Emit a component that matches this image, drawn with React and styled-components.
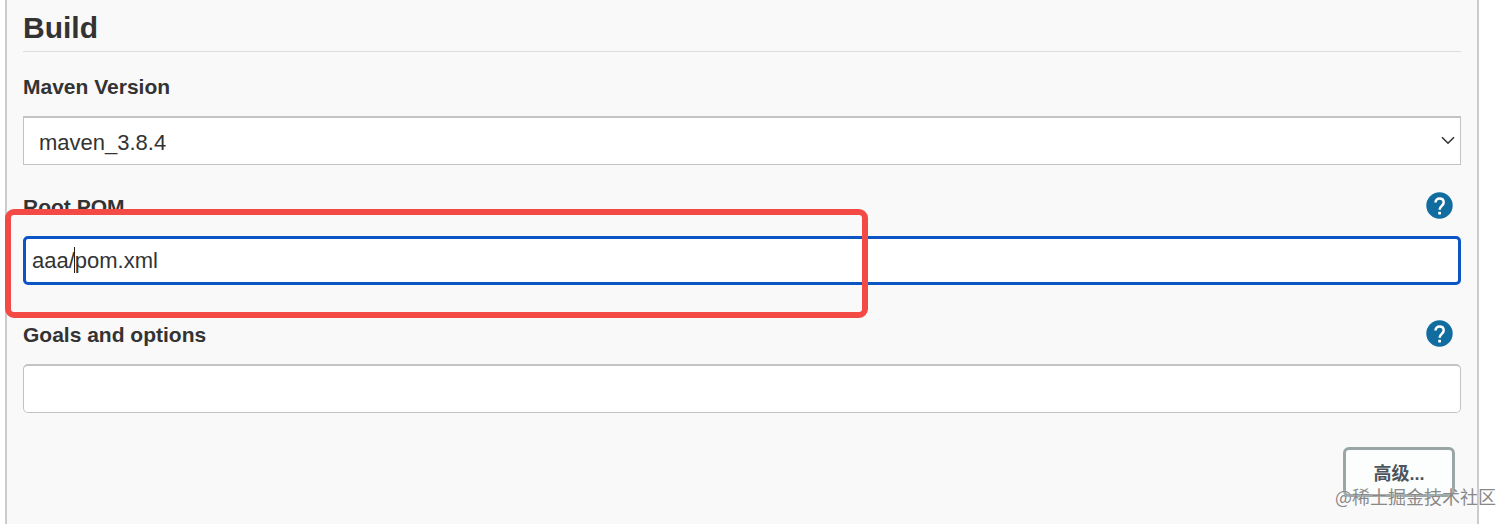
import React, { useState } from "react";
import styled, { createGlobalStyle } from "styled-components";

const App = () => {
  const [pom, setPom] = useState("aaa/pom.xml");
  const [goals, setGoals] = useState("");

  return (
    <>
      <GlobalStyle />
      <Page>
        <Section>
          <SectionTitle>Build</SectionTitle>

          <LabelRow gap="12px">
            <Label htmlFor="maven">Maven Version</Label>
          </LabelRow>
          <SelectWrapper>
            <Select id="maven" defaultValue="maven_3.8.4">
              <option>maven_3.8.4</option>
            </Select>
            <Chevron />
          </SelectWrapper>

          <LabelRow gap="19px">
            <Label htmlFor="pom">Root POM</Label>
            <HelpButton name="Root POM" />
          </LabelRow>
          <InputWrapper>
            <TextInput id="pom" active value={pom} onChange={e => setPom(e.target.value)} />
            <Caret />
            <Highlight />
          </InputWrapper>

          <LabelRow gap="27px">
            <Label htmlFor="goals">Goals and options</Label>
            <HelpButton name="Goals and options" />
          </LabelRow>
          <InputWrapper>
            <TextInput id="goals" value={goals} onChange={e => setGoals(e.target.value)} />
          </InputWrapper>

          <Actions>
            <AdvancedButton type="button">高级...</AdvancedButton>
          </Actions>
        </Section>
        <Watermark>@稀土掘金技术社区</Watermark>
      </Page>
    </>
  );
};

const HelpButton = ({ name }) => (
  <Help type="button" aria-label={`Help for ${name}`}>
    <svg width="27" height="27" viewBox="0 0 27 27" fill="none">
      <circle cx="13.5" cy="13.5" r="13.2" fill="#116ca0" />
      <path
        d="M9.5 10.6C9.5 8.2 11.2 6.6 13.6 6.6s4.1 1.6 4.1 3.9c0 3.2-4.1 3.6-4.1 7.2"
        stroke="#fff"
        strokeWidth="2.5"
      />
      <rect x="12.2" y="19.8" width="2.8" height="2.8" rx="0.6" fill="#fff" />
    </svg>
  </Help>
);

const Chevron = () => (
  <ChevronIcon width="14" height="9" viewBox="0 0 14 9" fill="none">
    <path d="M1 1.2l6 6 6-6" stroke="#333" strokeWidth="1.6" />
  </ChevronIcon>
);

//STYLED-COMPONENTS
const GlobalStyle = createGlobalStyle`
  * {
    box-sizing: border-box;
  }

  body {
    margin: 0;
    background: #fff;
    color: #333;
    font-family: "Liberation Sans", "Noto Sans CJK SC", sans-serif;
    font-size: 22px;
  }
`

const Page = styled.div`
  position: relative;
  display: flex;
  min-height: 100vh;
  padding: 0 33px 0 5px;
`

const Section = styled.section`
  flex: 1;
  padding: 4px 16px 26px;
  background: #f9f9f9;
  border: solid #ccc;
  border-width: 0 2px;
`

const SectionTitle = styled.h2`
  margin: 0;
  height: 48px;
  line-height: 48px;
  font-size: 30px;
  font-weight: 700;
  border-bottom: 1px solid #ddd;
`

const LabelRow = styled.div`
  display: flex;
  align-items: center;
  justify-content: space-between;
  height: 42px;
  margin-top: ${props => props.gap};
  margin-bottom: 10px;
  padding-right: 8px;
`

const Label = styled.label`
  padding-top: 4px;
  font-size: 21px;
  font-weight: 700;
  line-height: 28px;
`

const Help = styled.button`
  display: flex;
  padding: 0;
  background: none;
  border: none;
  cursor: pointer;
`

const SelectWrapper = styled.div`
  position: relative;
`

const Select = styled.select`
  display: block;
  width: 100%;
  height: 49px;
  padding: 2px 40px 0 15px;
  appearance: none;
  background: #fff;
  color: #333;
  font: inherit;
  border: 1px solid #c3c3c3;
  border-top-width: 2px;
  border-radius: 0;
`

const ChevronIcon = styled.svg`
  position: absolute;
  top: 20px;
  right: 6px;
  pointer-events: none;
`

const InputWrapper = styled.div`
  position: relative;
`

const TextInput = styled.input`
  display: block;
  width: 100%;
  height: 49px;
  padding: 0 ${props => props.active ? '6px' : '8px'};
  background: #fff;
  color: #333;
  font: inherit;
  border: ${props => props.active ? '3px solid #0b55c4' : '1px solid #c3c3c3'};
  border-top-width: ${props => props.active ? '3px' : '2px'};
  border-radius: 5px;
  outline: none;
`

const Caret = styled.span`
  position: absolute;
  top: 11px;
  left: 51px;
  width: 1px;
  height: 26px;
  background: #222;
`

const Highlight = styled.div`
  position: absolute;
  top: -27px;
  left: -18px;
  width: 60%;
  height: 109px;
  border: 6px solid #f44a46;
  border-radius: 9px;
  pointer-events: none;
`

const Actions = styled.div`
  display: flex;
  justify-content: flex-end;
  margin-top: 34px;
  padding-right: 6px;
`

const AdvancedButton = styled.button`
  min-width: 112px;
  height: 50px;
  padding: 0 24px;
  background: #fcfefe;
  color: #4d545d;
  font-family: "Liberation Sans", "Noto Sans CJK SC", sans-serif;
  font-size: 18px;
  font-weight: 700;
  border: 3px solid #9aa5a6;
  border-radius: 6px;
  cursor: pointer;
`

const Watermark = styled.div`
  position: absolute;
  right: 16px;
  bottom: 15px;
  color: #888;
  font-family: "Noto Sans CJK SC", sans-serif;
  font-size: 18px;
  line-height: 26px;
  text-shadow: 0 0 1px #fff;
`

export default App;
